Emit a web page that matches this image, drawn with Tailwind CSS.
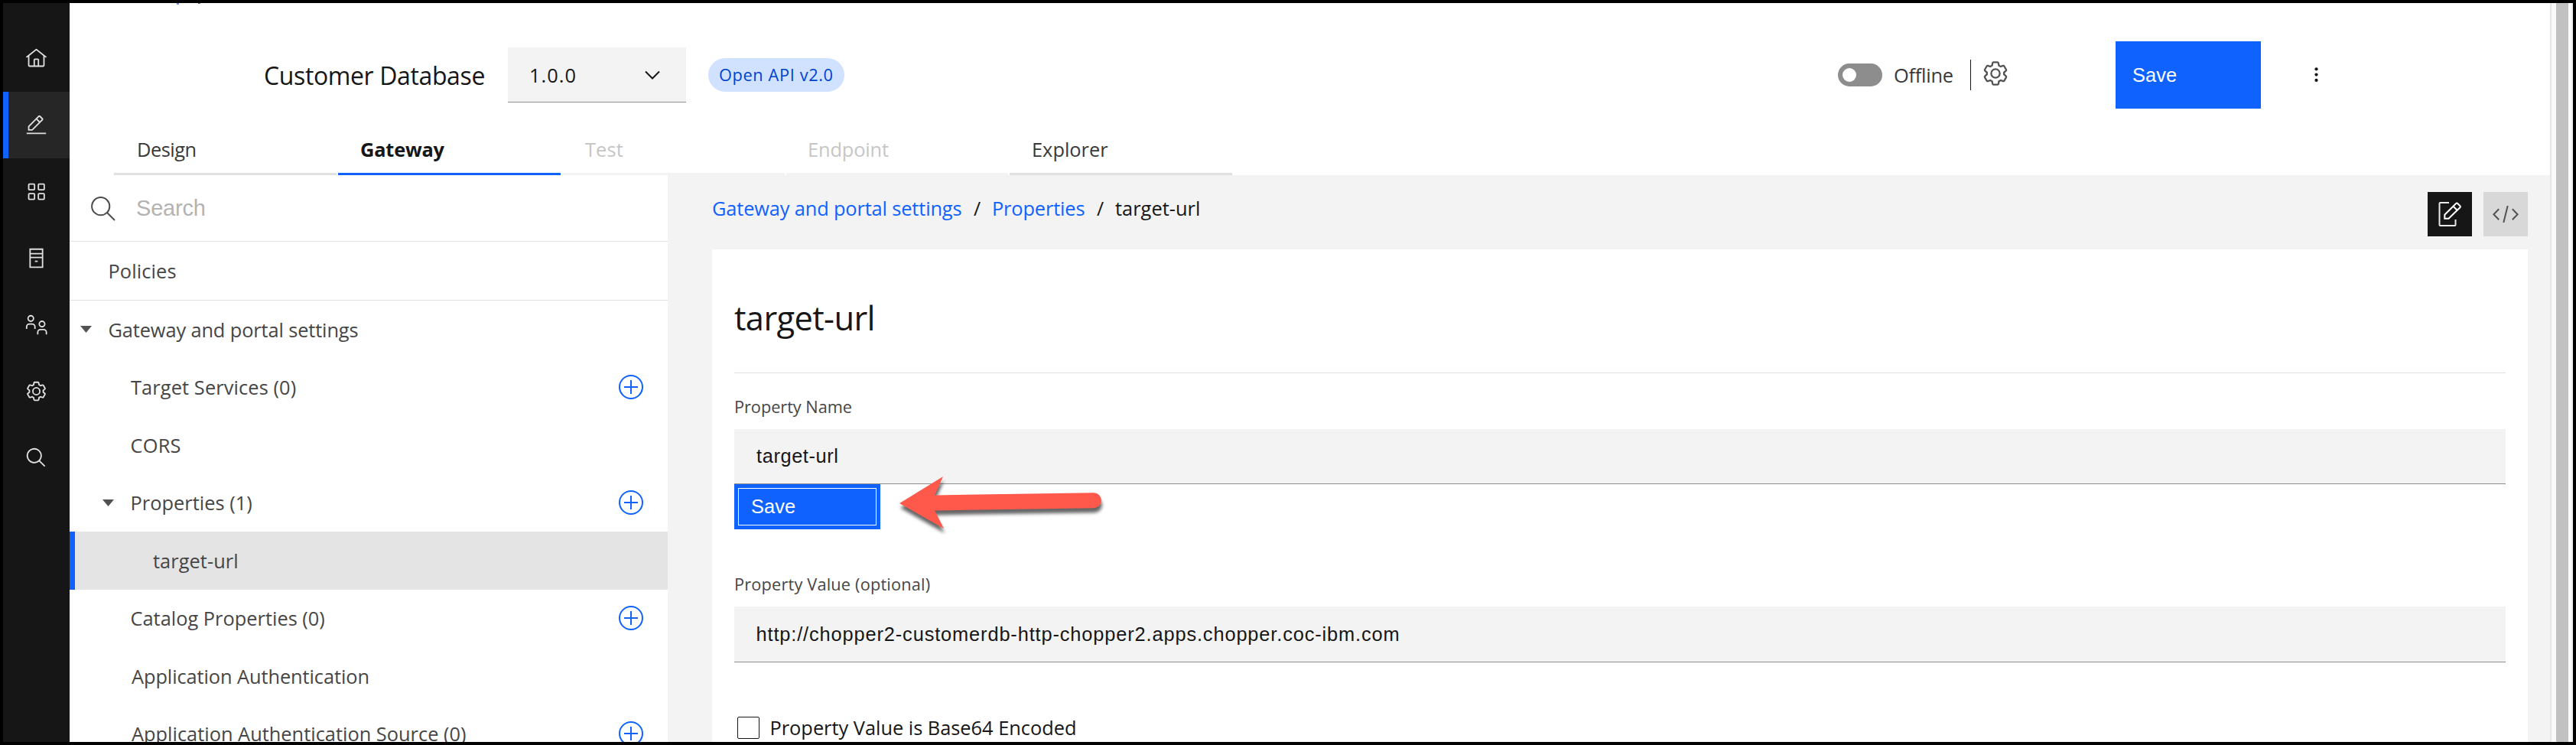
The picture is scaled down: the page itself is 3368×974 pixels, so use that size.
<!DOCTYPE html>
<html lang="en">
<head>
<meta charset="utf-8">
<title>Customer Database</title>
<script src="https://cdn.jsdelivr.net/npm/@tailwindcss/browser@4"></script>
</head>
<body class="bg-black">
<svg class="hidden">
  <symbol id="gear" viewBox="0 0 32 32"><path d="M27,16.76c0-.25,0-.5,0-.76s0-.51,0-.77l1.92-1.68A2,2,0,0,0,29.3,11L26.94,7a2,2,0,0,0-1.73-1,2,2,0,0,0-.64.1l-2.43.82a11.35,11.35,0,0,0-1.31-.75l-.51-2.52a2,2,0,0,0-2-1.61H13.64a2,2,0,0,0-2,1.61l-.51,2.52a11.48,11.48,0,0,0-1.32.75L7.43,6.06A2,2,0,0,0,6.79,6,2,2,0,0,0,5.06,7L2.7,11a2,2,0,0,0,.41,2.51L5,15.24c0,.25,0,.5,0,.76s0,.51,0,.77L3.11,18.45A2,2,0,0,0,2.7,21L5.06,25a2,2,0,0,0,1.73,1,2,2,0,0,0,.64-.1l2.43-.82a11.35,11.35,0,0,0,1.31.75l.51,2.52a2,2,0,0,0,2,1.61h4.72a2,2,0,0,0,2-1.61l.51-2.52a11.48,11.48,0,0,0,1.32-.75l2.42.82a2,2,0,0,0,.64.1,2,2,0,0,0,1.73-1L29.3,21a2,2,0,0,0-.41-2.51ZM25.21,24l-3.43-1.16a8.86,8.86,0,0,1-2.71,1.57L18.36,28H13.64l-.71-3.55a9.36,9.36,0,0,1-2.7-1.57L6.79,24,4.43,20l2.72-2.4a8.9,8.9,0,0,1,0-3.13L4.43,12,6.79,8l3.43,1.16a8.86,8.86,0,0,1,2.71-1.57L13.64,4h4.72l.71,3.55a9.36,9.36,0,0,1,2.7,1.57L25.21,8,27.57,12l-2.72,2.4a8.9,8.9,0,0,1,0,3.13L27.57,20Z M16,22a6,6,0,1,1,6-6A5.94,5.94,0,0,1,16,22Zm0-10a3.91,3.91,0,0,0-4,4,3.91,3.91,0,0,0,4,4,3.91,3.91,0,0,0,4-4A3.91,3.91,0,0,0,16,12Z"/></symbol>
  <symbol id="add" viewBox="0 0 32 32"><circle cx="16" cy="16" r="15" fill="none" stroke="currentColor" stroke-width="2"/><path d="M16 7v18M7 16h18" stroke="currentColor" stroke-width="2"/></symbol>
</svg>
<div class="relative flex h-[974px] w-[3368px] overflow-hidden border-4 border-black bg-white font-['Open_Sans',sans-serif] text-[25.4px] whitespace-nowrap text-[#161616]">

  <!-- Navigation rail -->
  <nav class="flex w-[87px] shrink-0 flex-col bg-[#161616] pt-[29px] text-[#e0e0e0]">
    <a class="flex h-[87px] items-center justify-center"><svg class="size-[29px]" viewBox="0 0 32 32" fill="currentColor"><path d="M16.61 2.21a1 1 0 0 0-1.24 0L1 13.42 2.24 15 4 13.62V26a2 2 0 0 0 2 2H26a2 2 0 0 0 2-2V13.63L29.76 15 31 13.43ZM18 26H14V18h4Zm2 0V18a2 2 0 0 0-2-2H14a2 2 0 0 0-2 2v8H6V12.06L16 4.27l10 7.8V26Z"/></svg></a>
    <a class="flex h-[87px] items-center justify-center border-l-[7px] border-[#0f62fe] bg-[#262626] pr-[7px]"><svg class="size-[29px]" viewBox="0 0 32 32" fill="currentColor"><path d="M2 27h28v2H2zM25.4 9c.8-.8.8-2 0-2.8L21.8 2.6c-.8-.8-2-.8-2.8 0l-15 15V24h6.4L25.4 9zM20.4 4L24 7.6l-3 3L17.4 7l3-3zM6 22v-3.6l10-10 3.6 3.6-10 10H6z"/></svg></a>
    <a class="flex h-[87px] items-center justify-center"><svg class="size-[29px]" viewBox="0 0 32 32" fill="none" stroke="currentColor" stroke-width="2"><rect x="5" y="5" width="8.4" height="8.4" rx="1"/><rect x="19" y="5" width="8.4" height="8.4" rx="1"/><rect x="5" y="18.8" width="8.4" height="8.4" rx="1"/><rect x="19" y="18.8" width="8.4" height="8.4" rx="1"/></svg></a>
    <a class="flex h-[87px] items-center justify-center"><svg class="size-[29px]" viewBox="0 0 32 32" fill="none" stroke="currentColor" stroke-width="2"><path d="M7 3h18v26H7zM7 9.500h18M7 15h18M14 20.500h4"/></svg></a>
    <a class="flex h-[87px] items-center justify-center"><svg class="size-[29px]" viewBox="0 0 32 32" fill="none" stroke="currentColor" stroke-width="2"><circle cx="8" cy="7" r="4"/><path d="M2 22v-3a4 4 0 0 1 4-4h4a4 4 0 0 1 4 4v3"/><circle cx="24.200" cy="15" r="4"/><path d="M18 30v-3a4 4 0 0 1 4-4h4.500a4 4 0 0 1 4 4v3"/></svg></a>
    <a class="flex h-[87px] items-center justify-center"><svg class="size-[29px]" fill="currentColor"><use href="#gear"/></svg></a>
    <a class="flex h-[87px] items-center justify-center"><svg class="size-[29px]" viewBox="0 0 32 32" fill="currentColor"><path d="M29 27.586l-7.552-7.552a11.018 11.018 0 1 0-1.414 1.414L27.586 29zM4 13a9 9 0 1 1 9 9 9.01 9.01 0 0 1-9-9z"/></svg></a>
  </nav>

  <div class="flex w-[3243px] shrink-0 flex-col">
    <!-- Page header -->
    <header class="flex h-[225px] shrink-0 flex-col pt-[50px]">
      <div class="flex h-[88px] shrink-0 items-center">
        <h1 class="ml-[254px] w-[319px] pt-[2px] text-[32px] leading-[44px] tracking-[-0.38px]">Customer Database</h1>
        <div class="flex h-[72px] w-[233px] items-center justify-between border-b border-[#8d8d8d] bg-[#f3f3f3] pr-[34px] pl-[28px]">
          <span class="pt-px tracking-[1.02px]">1.0.0</span>
          <svg class="h-[12px] w-[20px]" viewBox="0 0 20 12" fill="none" stroke="#161616" stroke-width="2"><path d="M1 1.500l9 9 9-9"/></svg>
        </div>
        <span class="ml-[29px] flex h-[44px] w-[178px] items-center rounded-full bg-[#d0e2ff] pl-[14px] text-[21.75px] tracking-[0.63px] text-[#0043ce]">Open API v2.0</span>
        <span class="ml-[1299px] flex h-[30px] w-[58px] items-center rounded-full bg-[#8d8d8d] pl-[6px]"><span class="size-[18px] rounded-full bg-white"></span></span>
        <span class="ml-[15px] w-[100px] pt-px tracking-[-0.25px] text-[#393939]">Offline</span>
        <span class="h-[40px] w-px bg-[#161616]"></span>
        <svg class="mb-[4px] ml-[14px] size-[36px] text-[#525252]" fill="currentColor"><use href="#gear"/></svg>
        <button class="ml-[139px] h-[88px] w-[190px] bg-[#0f62fe] pl-[22px] text-left font-['Liberation_Sans',Arial,sans-serif] tracking-[0.1px] text-white">Save</button>
        <svg class="ml-[67px] h-[20px] w-[11px]" viewBox="0 0 11 20" fill="#161616"><circle cx="5.500" cy="2.300" r="2.100"/><circle cx="5.500" cy="9.600" r="2.100"/><circle cx="5.500" cy="16.900" r="2.100"/></svg>
      </div>
      <div class="mt-[21px] ml-[58px] flex gap-[2px] text-[#393939]">
        <a class="flex h-[66px] w-[291px] items-center border-b-[3px] border-[#e0e0e0] pt-[2px] pl-[30px] tracking-[-0.5px]">Design</a>
        <a class="flex h-[66px] w-[291px] items-center border-b-[3px] border-[#0f62fe] pt-[2px] pl-[29px] font-bold tracking-[-0.2px] text-[#161616]">Gateway</a>
        <a class="flex h-[66px] w-[291px] items-center border-b-[3px] border-[#f3f3f3] pt-[2px] pl-[30px] tracking-[0.1px] text-[#c6c6c6]">Test</a>
        <a class="flex h-[66px] w-[290px] items-center border-b-[3px] border-[#f3f3f3] pt-[2px] pl-[28px] tracking-[-0.15px] text-[#c6c6c6]">Endpoint</a>
        <a class="flex h-[66px] w-[291px] items-center border-b-[3px] border-[#e0e0e0] pt-[2px] pl-[29px]">Explorer</a>
      </div>
    </header>

    <div class="flex h-[741px] overflow-hidden">
      <!-- Resource tree -->
      <aside class="flex w-[782px] shrink-0 flex-col text-[#464646]">
        <div class="flex h-[87px] shrink-0 items-center border-b border-[#e0e0e0] pt-px pl-[28px]">
          <svg class="size-[32px]" viewBox="0 0 32 32" fill="none" stroke="#4c4c4c" stroke-width="2"><circle cx="12.700" cy="12.700" r="11.600"/><path d="M21 21l10 10"/></svg>
          <span class="ml-[27px] pt-px font-['Liberation_Sans',Arial,sans-serif] text-[29px] tracking-[-0.2px] text-[#b3b3b3]">Search</span>
        </div>
        <div class="flex h-[77px] shrink-0 items-center border-b border-[#e0e0e0] pl-[50.500px] tracking-[0.1px]">Policies</div>
        <div class="flex h-[75.500px] shrink-0 items-center pl-[14px] tracking-[-0.13px]"><svg class="mr-[21.500px] h-[9px] w-[15px]" viewBox="0 0 15 9" fill="#525252"><path d="M0 0h15L7.500 9z"/></svg>Gateway and portal settings</div>
        <div class="flex h-[75.500px] shrink-0 items-center justify-between pr-[32px] pl-[80px] tracking-[0.1px]">Target Services (0)<svg class="size-[32px] text-[#0f62fe]"><use href="#add"/></svg></div>
        <div class="flex h-[75.500px] shrink-0 items-center pl-[79.500px] tracking-[0.2px]">CORS</div>
        <div class="flex h-[75.500px] shrink-0 items-center pr-[32px] pl-[43px]"><svg class="mr-[21.500px] h-[9px] w-[15px]" viewBox="0 0 15 9" fill="#525252"><path d="M0 0h15L7.500 9z"/></svg><span class="flex-1 tracking-[0.02px]">Properties (1)</span><svg class="size-[32px] text-[#0f62fe]"><use href="#add"/></svg></div>
        <div class="flex h-[75.500px] shrink-0 items-center border-l-[7px] border-[#0f62fe] bg-[#e4e4e4] pl-[102px] tracking-[0.05px]">target-url</div>
        <div class="flex h-[75.500px] shrink-0 items-center justify-between pr-[32px] pl-[79.500px]">Catalog Properties (0)<svg class="size-[32px] text-[#0f62fe]"><use href="#add"/></svg></div>
        <div class="flex h-[75.500px] shrink-0 items-center pl-[81px] tracking-[-0.09px]">Application Authentication</div>
        <div class="flex h-[75.500px] shrink-0 items-center justify-between pr-[32px] pl-[81px]">Application Authentication Source (0)<svg class="size-[32px] text-[#0f62fe]"><use href="#add"/></svg></div>
      </aside>

      <!-- Property editor -->
      <main class="flex flex-1 flex-col bg-[#f3f3f3] pr-[29px] pl-[58px]">
        <div class="flex h-[97px] shrink-0 items-start justify-between">
          <div class="flex pt-[25px] leading-[36px]">
            <a class="w-[342px] tracking-[-0.15px] text-[#0f62fe]">Gateway and portal settings</a>
            <span class="w-[24px] text-[25px]">/</span>
            <a class="w-[137px] tracking-[-0.15px] text-[#0f62fe]">Properties</a>
            <span class="w-[24px] text-[25px]">/</span>
            <span class="tracking-[0.02px]">target-url</span>
          </div>
          <div class="flex gap-[15px] pt-[22px]">
            <button class="flex size-[58px] items-center justify-center bg-[#161616]"><svg class="h-[32px] w-[30px]" viewBox="0 0 30 32" fill="none" stroke="#fff" stroke-width="2"><path d="M14 1H2.500a1 1 0 0 0-1 1V30a1 1 0 0 0 1 1H21.500a1 1 0 0 0 1-1V23" stroke="#e8e8e8"/><path d="M8.300 21.700V16.700L23.200 2a1.500 1.500 0 0 1 2 0l3.200 3.200a1.500 1.500 0 0 1 0 2L13.500 21.700zM19.500 5.700l5.100 5.100"/></svg></button>
            <button class="flex size-[58px] items-center justify-center bg-[#d8d8d8]"><svg class="h-[22px] w-[34px]" viewBox="0 0 34 22" fill="none" stroke="#525252" stroke-width="2"><path d="M8.200 4.300L1.400 11.300l6.800 7M19.700 0L14.300 22M25.800 4.300l6.800 7-6.800 7"/></svg></button>
          </div>
        </div>
        <section class="flex flex-1 shrink-0 flex-col items-start bg-white px-[29px] pt-[60px]">
          <h2 class="text-[43.5px] leading-[60px] tracking-[-0.65px]">target-url</h2>
          <div class="mt-[41px] h-px w-full shrink-0 bg-[#e0e0e0]"></div>
          <label class="mt-[29px] text-[21.75px] leading-[30px] tracking-[-0.05px] text-[#464646]">Property Name</label>
          <div class="mt-[14px] flex h-[72px] w-full shrink-0 items-center border-b border-[#8d8d8d] bg-[#f3f3f3] pl-[29px] font-['Liberation_Sans',Arial,sans-serif] tracking-[0.6px]">target-url</div>
          <button class="h-[59px] w-[191px] shrink-0 bg-[#0f62fe] p-[5px] text-left font-['Liberation_Sans',Arial,sans-serif] tracking-[0.1px] text-white"><span class="flex h-full items-center border border-white pl-[16px]">Save</span></button>
          <label class="mt-[57px] text-[21.75px] leading-[30px] tracking-[0.17px] text-[#464646]">Property Value (optional)</label>
          <div class="mt-[14px] flex h-[73px] w-full shrink-0 items-center border-b border-[#8d8d8d] bg-[#f3f3f3] pt-px pl-[28.500px] font-['Liberation_Sans',Arial,sans-serif] tracking-[0.86px]">http://chopper2-customerdb-http-chopper2.apps.chopper.coc-ibm.com</div>
          <label class="mt-[71px] ml-[4px] flex h-[29px] items-center tracking-[-0.02px]"><span class="mr-[13.500px] size-[29px] rounded-[2px] border border-[#161616]"></span>Property Value is Base64 Encoded</label>
        </section>
      </main>
    </div>
  </div>

  <!-- Scrollbar -->
  <div class="w-[30px] shrink-0 border-r-2 border-l-2 border-r-[#ececec] border-l-[#e6e6e6] bg-[#fafafa] pl-[6px]"><div class="h-full w-[16px] bg-[#c1c1c1]"></div></div>

  <!-- Slivers of the row scrolled above the header -->
  <span class="absolute top-0 left-[227px] h-[2px] w-[3px] bg-[#5590fe]"></span>
  <span class="absolute top-0 left-[255px] h-px w-[3px] bg-[#6f6f6f]"></span>

  <!-- Annotation arrow -->
  <svg class="absolute top-[612px] left-[1165px] h-[86px] w-[280px] drop-shadow-[1px_6px_2px_rgba(0,0,0,0.6)]" viewBox="0 0 280 86"><path fill="#ff594b" d="M7 42L64 7L53 31.500L261 28.200A10 10 0 0 1 261 48.200L53 51.500L65 75Z"/></svg>
</div>
</body>
</html>
